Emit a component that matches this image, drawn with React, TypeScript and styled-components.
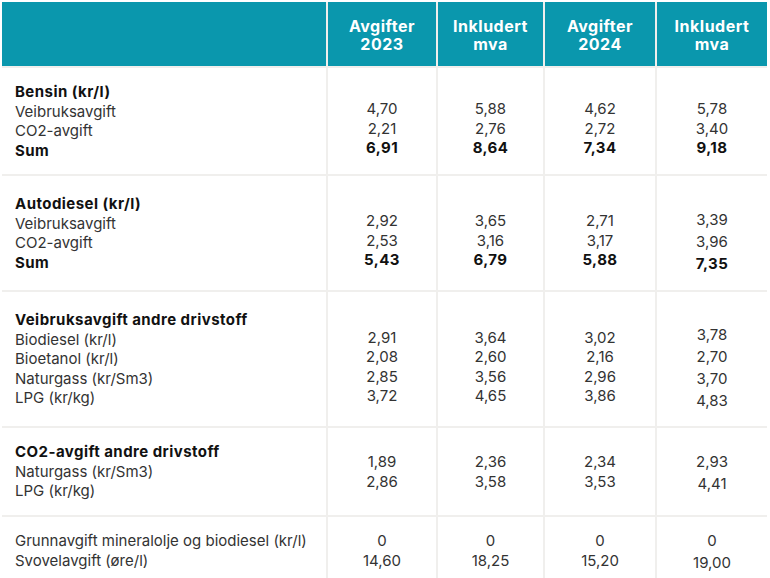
import React from "react";
import styled, { createGlobalStyle } from "styled-components";

const GlobalStyle = createGlobalStyle`
  html, body { margin: 0; padding: 0; background: #ffffff; }
  body { font-family: Inter, "Open Sans", Arial, sans-serif; color: #222; }
`;

const Page = styled.div`
  padding: 2px 0 0 2px;
  width: 770px;
  height: 578px;
  box-sizing: border-box;
  overflow: hidden;
`;

const Table = styled.div`
  display: grid;
  grid-template-columns: 324px 108px 105px 110px 110px;
  grid-template-rows: 64px 106px 114px 134px 87px 67px;
  gap: 2px;
  background: #f0efed;
  width: 765px;
`;

const HeadCell = styled.div`
  background: #0a97ad;
  color: #ffffff;
  font-weight: 700;
  font-size: 16px;
  line-height: 17.5px;
  padding-top: 3px;
  box-sizing: border-box;
  text-align: center;
  display: flex;
  flex-direction: column;
  justify-content: center;
  letter-spacing: 0.5px;
`;

const LabelCell = styled.div`
  background: #ffffff;
  padding: 0 13px;
  display: flex;
  flex-direction: column;
  justify-content: center;
  font-size: 15px;
  line-height: 19.5px;
`;

const NumCell = styled.div<{ $loose?: boolean }>`
  background: #ffffff;
  display: flex;
  flex-direction: column;
  justify-content: center;
  align-items: center;
  font-size: 15px;
  line-height: ${(p) => (p.$loose ? "22px" : "19.5px")};
  padding-top: ${(p) => (p.$loose ? "2px" : "0")};
  box-sizing: border-box;
`;

const Line = styled.div<{ $bold?: boolean }>`
  font-weight: ${(p) => (p.$bold ? 700 : 400)};
  color: ${(p) => (p.$bold ? "#111" : "#333")};
  letter-spacing: ${(p) => (p.$bold ? "0.45px" : "0")};
  white-space: nowrap;
  min-height: 1em;
`;

type Group = {
  title?: string;
  rows: { label: string; values: string[]; bold?: boolean }[];
  blank: boolean;
  lastLoose: boolean;
};

const groups: Group[] = [
  {
    title: "Bensin (kr/l)",
    blank: true,
    lastLoose: false,
    rows: [
      { label: "Veibruksavgift", values: ["4,70", "5,88", "4,62", "5,78"] },
      { label: "CO2-avgift", values: ["2,21", "2,76", "2,72", "3,40"] },
      { label: "Sum", values: ["6,91", "8,64", "7,34", "9,18"], bold: true },
    ],
  },
  {
    title: "Autodiesel (kr/l)",
    blank: true,
    lastLoose: true,
    rows: [
      { label: "Veibruksavgift", values: ["2,92", "3,65", "2,71", "3,39"] },
      { label: "CO2-avgift", values: ["2,53", "3,16", "3,17", "3,96"] },
      { label: "Sum", values: ["5,43", "6,79", "5,88", "7,35"], bold: true },
    ],
  },
  {
    title: "Veibruksavgift andre drivstoff",
    blank: true,
    lastLoose: true,
    rows: [
      { label: "Biodiesel (kr/l)", values: ["2,91", "3,64", "3,02", "3,78"] },
      { label: "Bioetanol (kr/l)", values: ["2,08", "2,60", "2,16", "2,70"] },
      { label: "Naturgass (kr/Sm3)", values: ["2,85", "3,56", "2,96", "3,70"] },
      { label: "LPG (kr/kg)", values: ["3,72", "4,65", "3,86", "4,83"] },
    ],
  },
  {
    title: "CO2-avgift andre drivstoff",
    blank: false,
    lastLoose: true,
    rows: [
      { label: "Naturgass (kr/Sm3)", values: ["1,89", "2,36", "2,34", "2,93"] },
      { label: "LPG (kr/kg)", values: ["2,86", "3,58", "3,53", "4,41"] },
    ],
  },
  {
    blank: false,
    lastLoose: true,
    rows: [
      { label: "Grunnavgift mineralolje og biodiesel (kr/l)", values: ["0", "0", "0", "0"] },
      { label: "Svovelavgift (øre/l)", values: ["14,60", "18,25", "15,20", "19,00"] },
    ],
  },
];

const headers = [
  ["Avgifter", "2023"],
  ["Inkludert", "mva"],
  ["Avgifter", "2024"],
  ["Inkludert", "mva"],
];

export default function App() {
  return (
    <Page>
      <GlobalStyle />
      <Table>
        <HeadCell />
        {headers.map((h, i) => (
          <HeadCell key={i}>
            <div>{h[0]}</div>
            <div>{h[1]}</div>
          </HeadCell>
        ))}
        {groups.map((g, gi) => (
          <React.Fragment key={gi}>
            <LabelCell>
              {g.title && <Line $bold>{g.title}</Line>}
              {g.rows.map((r, ri) => (
                <Line key={ri} $bold={r.bold}>
                  {r.label}
                </Line>
              ))}
            </LabelCell>
            {[0, 1, 2, 3].map((ci) => (
              <NumCell key={ci} $loose={ci === 3 && g.lastLoose}>
                {g.blank && <Line />}
                {g.rows.map((r, ri) => (
                  <Line key={ri} $bold={r.bold}>
                    {r.values[ci]}
                  </Line>
                ))}
              </NumCell>
            ))}
          </React.Fragment>
        ))}
      </Table>
    </Page>
  );
}
